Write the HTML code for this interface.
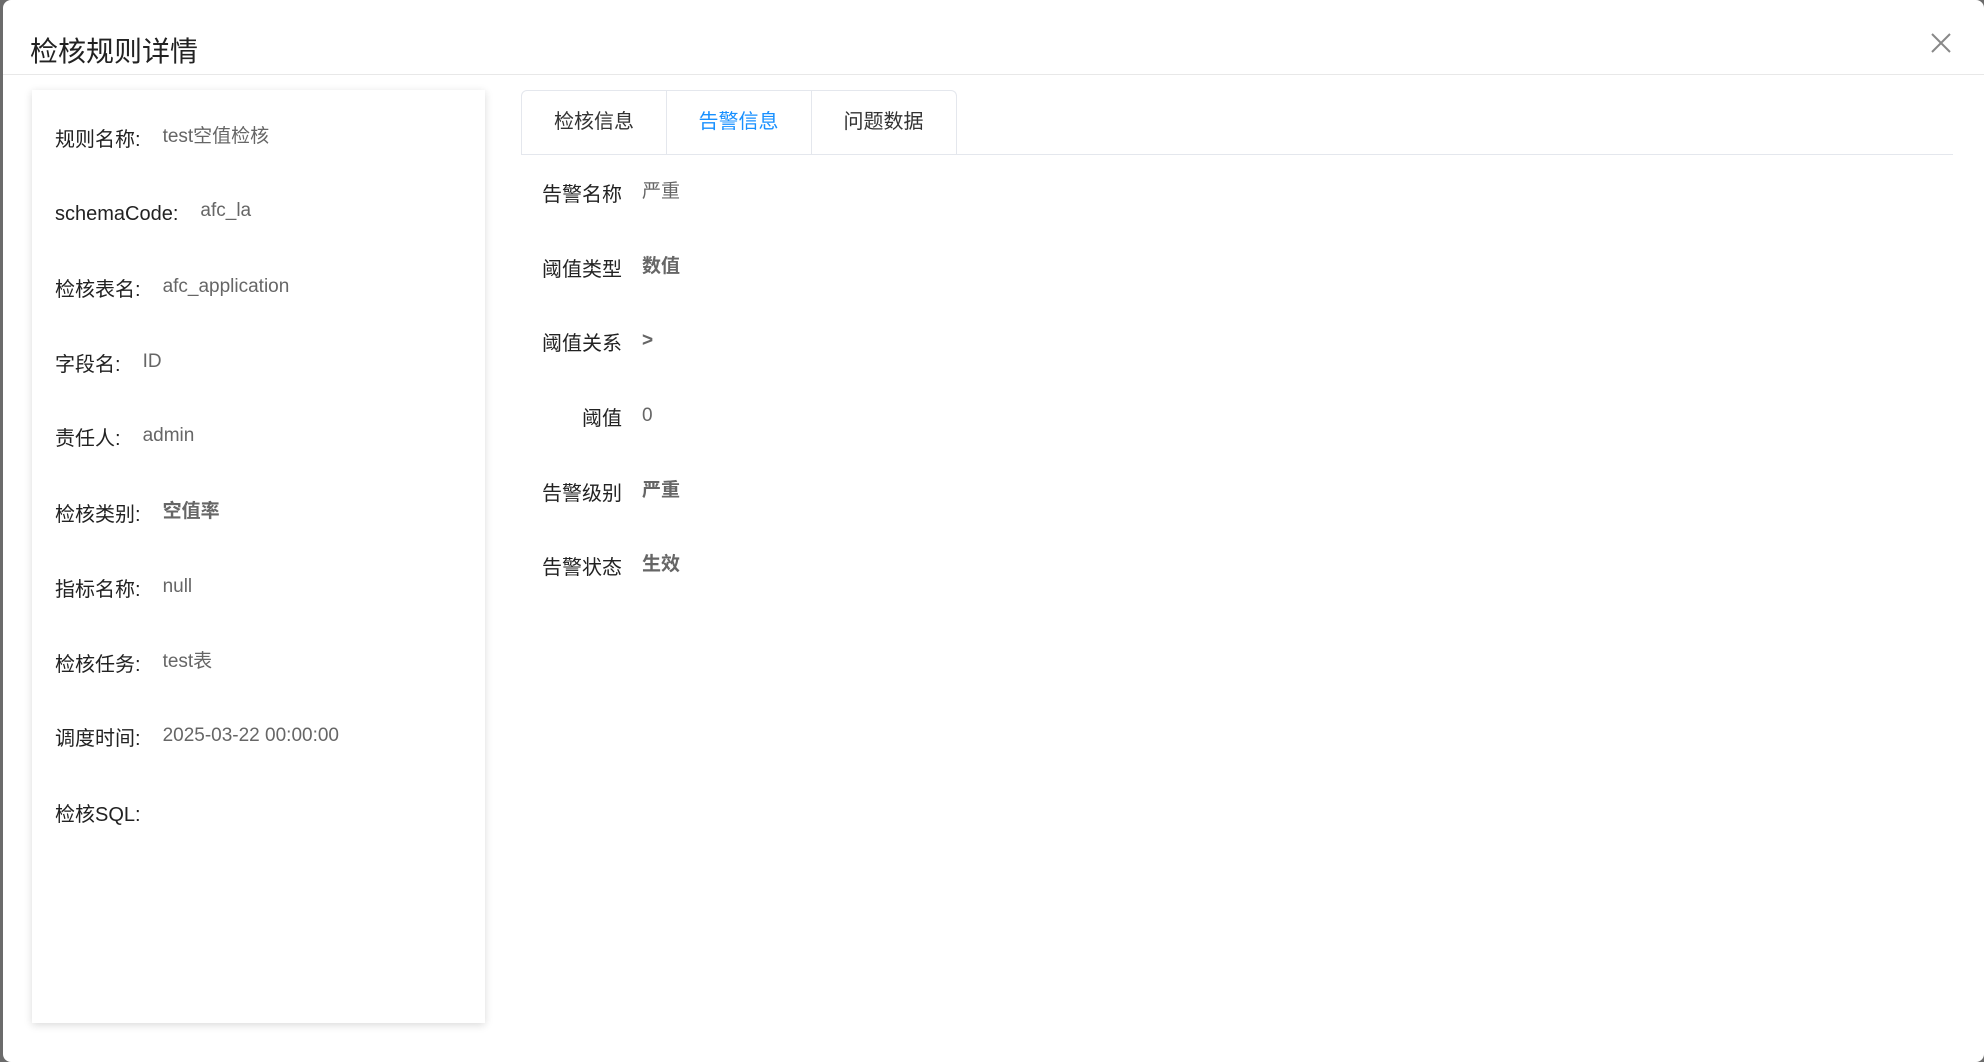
<!DOCTYPE html>
<html><head><meta charset="utf-8"><style>
*{box-sizing:border-box;margin:0;padding:0}
html,body{width:1984px;height:1062px;overflow:hidden;background:#6b6b6b;font-family:"Liberation Sans","Noto Sans CJK SC",sans-serif}
.modal{position:absolute;left:3px;top:0;width:1981px;height:1062px;background:#fff;border-radius:8px}
.hd{position:absolute;left:0;top:0;right:0;height:75px;border-bottom:1px solid #e8e8e8}
.title{position:absolute;left:27px;top:30px;font-size:28px;color:#222}
.close{position:absolute;left:1927px;top:32px}
.card{position:absolute;left:29px;top:90px;width:453px;height:933px;background:#fff;box-shadow:0 2px 8px rgba(0,0,0,.15)}
.row{position:absolute;left:23px;font-size:20px;color:#222;white-space:nowrap}
.row .v{margin-left:22px;color:#666;font-size:19px;position:relative;top:-4px}
.b{font-weight:bold}
.tabs{position:absolute;left:518px;top:90px;width:1432px;height:65px;border-bottom:1px solid #e4e7ed}
.tab{position:absolute;top:0;height:65px;border:1px solid #e4e7ed;border-bottom:none;font-size:20px;color:#333;text-align:center;line-height:62px}
.r{position:absolute;font-size:20px;color:#222;white-space:nowrap}
.r .l{display:inline-block;width:102px;text-align:right}
.r .v{margin-left:20px;color:#666;font-size:19px;position:relative;top:-4px}
</style></head><body>
<div class="modal">
<div class="hd"><div class="title">检核规则详情</div>
<svg class="close" width="22" height="22" viewBox="0 0 22 22"><path d="M2 2L20 20M20 2L2 20" stroke="#888" stroke-width="2"/></svg></div>
<div class="card">
<div class="row" style="top:33px">规则名称:<span class="v">test空值检核</span></div>
<div class="row" style="top:113px">schemaCode:<span class="v">afc_la</span></div>
<div class="row" style="top:183px">检核表名:<span class="v">afc_application</span></div>
<div class="row" style="top:258px">字段名:<span class="v">ID</span></div>
<div class="row" style="top:332px">责任人:<span class="v">admin</span></div>
<div class="row" style="top:408px">检核类别:<span class="v b">空值率</span></div>
<div class="row" style="top:483px">指标名称:<span class="v">null</span></div>
<div class="row" style="top:558px">检核任务:<span class="v">test表</span></div>
<div class="row" style="top:632px">调度时间:<span class="v">2025-03-22 00:00:00</span></div>
<div class="row" style="top:708px">检核SQL:</div>
</div>
<div class="tabs">
<div class="tab" style="left:0;width:146px;border-radius:6px 0 0 0">检核信息</div>
<div class="tab" style="left:145px;width:146px;color:#1890ff;border-left:none">告警信息</div>
<div class="tab" style="left:290px;width:146px;border-radius:0 6px 0 0;border-left:none">问题数据</div>
</div>
<div class="r" style="left:517px;top:178px"><span class="l">告警名称</span><span class="v">严重</span></div>
<div class="r" style="left:517px;top:253px"><span class="l">阈值类型</span><span class="v b">数值</span></div>
<div class="r" style="left:517px;top:327px"><span class="l">阈值关系</span><span class="v b">&gt;</span></div>
<div class="r" style="left:517px;top:402px"><span class="l">阈值</span><span class="v">0</span></div>
<div class="r" style="left:517px;top:477px"><span class="l">告警级别</span><span class="v b">严重</span></div>
<div class="r" style="left:517px;top:551px"><span class="l">告警状态</span><span class="v b">生效</span></div>
</div>
</body></html>
